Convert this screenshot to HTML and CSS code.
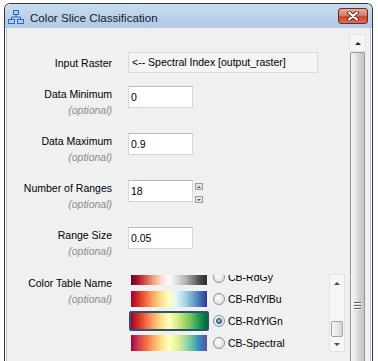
FILE: index.html
```html
<!DOCTYPE html>
<html lang="en">
<head>
    <meta charset="UTF-8">
    <title>Color Slice Classification</title>
    <link rel="stylesheet" href="styles.css">
</head>
<body>
    <div class="window">
        <div class="titlebar">
            <svg class="app-icon" width="16" height="14" viewBox="0 0 16 14">
                <path d="M8 4.5V7M3.5 7H12.5M3.5 7V9.5M12.5 7V9.5" stroke="#2f6db5" stroke-width="1" fill="none"/>
                <rect x="5.5" y="0.5" width="5" height="4" fill="#a8d0f4" stroke="#2f6db5"/>
                <rect x="0.5" y="9.5" width="6" height="4" fill="#a8d0f4" stroke="#2f6db5"/>
                <rect x="9.5" y="9.5" width="6" height="4" fill="#a8d0f4" stroke="#2f6db5"/>
            </svg>
            <span class="title">Color Slice Classification</span>
            <div class="close">
                <svg width="14" height="10" viewBox="0 0 14 10">
                    <path d="M3 1.5L11 8.5M11 1.5L3 8.5" stroke="#5a2a22" stroke-width="4" stroke-linecap="round"/>
                    <path d="M3 1.5L11 8.5M11 1.5L3 8.5" stroke="#ffffff" stroke-width="2.2" stroke-linecap="round"/>
                </svg>
            </div>
        </div>

        <div class="client">
            <div class="form">
                <div class="row first">
                    <div class="label">Input Raster</div>
                    <div class="raster">&lt;-- Spectral Index [output_raster]</div>
                </div>

                <div class="row">
                    <div class="label">Data Minimum<div class="opt">(optional)</div></div>
                    <input class="text" value="0">
                </div>

                <div class="row">
                    <div class="label">Data Maximum<div class="opt">(optional)</div></div>
                    <input class="text" value="0.9">
                </div>

                <div class="row">
                    <div class="label">Number of Ranges<div class="opt">(optional)</div></div>
                    <input class="text" value="18">
                    <div class="spin">
                        <span class="spin-btn"><span class="tri-up small"></span></span>
                        <span class="spin-btn"><span class="tri-down small"></span></span>
                    </div>
                </div>

                <div class="row short">
                    <div class="label">Range Size<div class="opt">(optional)</div></div>
                    <input class="text" value="0.05">
                </div>

                <div class="row colors">
                    <div class="label">Color Table Name<div class="opt">(optional)</div></div>
                    <div class="list">
                        <div class="items-view">
                            <div class="items">
                                <div class="item">
                                    <div class="swatch-wrap"><div class="swatch rdgy"></div></div>
                                    <span class="radio"></span>
                                    <span class="item-name">CB-RdGy</span>
                                </div>
                                <div class="item">
                                    <div class="swatch-wrap"><div class="swatch rdylbu"></div></div>
                                    <span class="radio"></span>
                                    <span class="item-name">CB-RdYlBu</span>
                                </div>
                                <div class="item">
                                    <div class="swatch-wrap selected"><div class="swatch rdylgn"></div></div>
                                    <span class="radio checked"></span>
                                    <span class="item-name">CB-RdYlGn</span>
                                </div>
                                <div class="item">
                                    <div class="swatch-wrap"><div class="swatch spectral"></div></div>
                                    <span class="radio"></span>
                                    <span class="item-name">CB-Spectral</span>
                                </div>
                            </div>
                        </div>
                        <div class="mini-scroll">
                            <div class="ms-btn up"><span class="tri-up"></span></div>
                            <div class="ms-track"></div>
                            <div class="ms-thumb"></div>
                            <div class="ms-btn down"><span class="tri-down"></span></div>
                        </div>
                    </div>
                </div>
            </div>

            <div class="vscroll">
                <div class="vs-up"><span class="tri-up dark"></span></div>
                <div class="vs-thumb"><span class="grip"></span></div>
            </div>
        </div>
    </div>
</body>
</html>
```

FILE: styles.css
```css
body {
    margin: 0;
    height: 361px;
    overflow: hidden;
    background: #fff;
    font-family: "Liberation Sans", Arial, sans-serif;
    font-size: 10.5px;
    color: #000;
}
.window {
    box-sizing: border-box;
    width: 369px;
    height: 358px;
    margin: 3px 0 0 4px;
    border: 1px solid #363636;
    border-bottom: none;
    border-radius: 6px 6px 0 0;
    background: #fff;
    display: flex;
    flex-direction: column;
    overflow: hidden;
}
.titlebar {
    height: 24px;
    flex-shrink: 0;
    display: flex;
    align-items: center;
    padding: 0 4px 0 3px;
    background: linear-gradient(#c9dcf0, #b0c8e5);
}
.app-icon {
    margin-top: 2px;
}
.title {
    flex: 1;
    margin-left: 6px;
    padding-top: 2px;
    font-size: 11.6px;
    color: #101c2c;
}
.close {
    align-self: flex-start;
    margin-top: 4px;
    box-sizing: border-box;
    width: 30px;
    height: 16px;
    border: 1px solid #6e2b21;
    border-radius: 3px;
    background: linear-gradient(#eaaa9b, #d8806a 45%, #c5452b 55%, #d6734f);
    display: flex;
    align-items: center;
    justify-content: center;
}
.client {
    flex: 1;
    display: flex;
    margin: 0 1px;
    border-left: 1px solid #a9c4e6;
    border-right: 1px solid #a9c4e6;
    background: #f0f0f0;
}
.form {
    flex: 1;
    padding-top: 24px;
}
.row {
    display: flex;
    align-items: flex-start;
    height: 47px;
}
.row.first {
    height: 34px;
}
.row.short {
    height: 46px;
}
.label {
    width: 105px;
    flex-shrink: 0;
    margin-right: 16px;
    padding-top: 2px;
    text-align: right;
    line-height: 13px;
}
.row.first .label {
    padding-top: 5px;
}
.row.colors .label {
    padding-top: 4px;
}
.opt {
    margin-top: 3px;
    font-style: italic;
    color: #8c8c8c;
}
.raster {
    box-sizing: border-box;
    width: 190px;
    height: 21px;
    padding-left: 3px;
    border: 1px solid #d9d9d9;
    background: #f4f4f4;
    line-height: 19px;
}
.text {
    box-sizing: border-box;
    width: 65px;
    height: 22px;
    margin: 0;
    padding: 0 2px;
    border: 1px solid #d6d6d6;
    border-top-color: #b9b9b9;
    background: #fff;
    font: inherit;
    color: #000;
    outline: none;
}
.spin {
    display: flex;
    flex-direction: column;
    gap: 6px;
    margin: 3px 0 0 2px;
}
.spin-btn {
    box-sizing: border-box;
    width: 8px;
    height: 7px;
    border: 1px solid #9b9b9b;
    background: #e6e6e6;
    display: flex;
    align-items: center;
    justify-content: center;
}
.tri-up, .tri-down {
    width: 0;
    height: 0;
    border-left: 3px solid transparent;
    border-right: 3px solid transparent;
}
.tri-up {
    border-bottom: 3px solid #4a4a4a;
}
.tri-down {
    border-top: 3px solid #4a4a4a;
}
.tri-up.small {
    border-width: 0 2px 2px;
    border-bottom-color: #555;
}
.tri-down.small {
    border-width: 2px 2px 0;
    border-top-color: #555;
}
.tri-up.dark {
    border-bottom-color: #222;
}
.list {
    display: flex;
    width: 217px;
    height: 79px;
}
.items-view {
    width: 201px;
    height: 77px;
    margin-top: 2px;
    overflow: hidden;
}
.items {
    margin-top: -9px;
    padding-left: 1px;
}
.item {
    height: 22px;
    display: flex;
    align-items: center;
}
.swatch-wrap {
    box-sizing: border-box;
    width: 80px;
    height: 20px;
    border: 2px solid transparent;
    border-radius: 2px;
}
.swatch-wrap.selected {
    border-color: #2c5273;
}
.swatch {
    height: 16px;
}
.rdgy {
    background: linear-gradient(90deg, #67001f, #b2182b, #d6604d, #f4a582, #fddbc7, #ffffff, #e0e0e0, #bababa, #878787, #4d4d4d, #2a2a2a);
}
.rdylbu {
    background: linear-gradient(90deg, #a50026, #d73027, #f46d43, #fdae61, #fee090, #ffffbf, #e0f3f8, #abd9e9, #74add1, #4575b4, #313695);
}
.rdylgn {
    background: linear-gradient(90deg, #a50026, #d73027, #f46d43, #fdae61, #fee08b, #ffffbf, #d9ef8b, #a6d96a, #66bd63, #1a9850, #006837);
}
.spectral {
    background: linear-gradient(90deg, #9e0142, #d53e4f, #f46d43, #fdae61, #fee08b, #ffffbf, #e6f598, #abdda4, #66c2a5, #3288bd, #5e4fa2);
}
.radio {
    box-sizing: border-box;
    width: 12px;
    height: 12px;
    margin-left: 4px;
    border: 1px solid #8e8f8f;
    border-radius: 50%;
    background: radial-gradient(circle at 40% 40%, #fafafa, #d8d8d8);
    display: flex;
    align-items: center;
    justify-content: center;
}
.radio.checked::after {
    content: "";
    box-sizing: border-box;
    width: 6px;
    height: 6px;
    border: 1px solid #1d3f5e;
    border-radius: 50%;
    background: radial-gradient(circle at 40% 40%, #8ad8fa, #1e6ea6);
}
.item-name {
    margin-left: 3px;
}
.mini-scroll {
    box-sizing: border-box;
    width: 16px;
    height: 78px;
    margin-top: 1px;
    border: 1px solid #e3e3e3;
    background: #f6f6f6;
    display: flex;
    flex-direction: column;
}
.ms-btn {
    height: 17px;
    display: flex;
    align-items: center;
    justify-content: center;
}
.ms-btn.down {
    height: 14px;
}
.ms-track {
    flex: 1;
}
.ms-thumb {
    box-sizing: border-box;
    height: 16px;
    margin: 0 1px;
    border: 1px solid #a3a3a3;
    border-radius: 2px;
    background: linear-gradient(90deg, #f7f7f7, #e4e4e4 60%, #d3d3d3);
}
.vscroll {
    width: 17px;
    margin: 6px 4px 0 0;
    display: flex;
    flex-direction: column;
    background: #ececec;
}
.vs-up {
    box-sizing: border-box;
    height: 18px;
    border: 1px solid #e4e4e4;
    background: #f5f5f5;
    display: flex;
    align-items: center;
    justify-content: center;
}
.vs-thumb {
    flex: 1;
    margin: 0 1px;
    border: 1px solid #979797;
    border-bottom: none;
    border-radius: 2px 2px 0 0;
    background: linear-gradient(90deg, #f4f4f4, #e6e6e6 40%, #d2d2d2 60%, #c6c6c6);
    display: flex;
    flex-direction: column;
    align-items: center;
}
.grip {
    width: 7px;
    height: 9px;
    margin-top: 249px;
    background: repeating-linear-gradient(#5e5e5e 0 1px, #fbfbfb 1px 2px, transparent 2px 3px);
}
```
